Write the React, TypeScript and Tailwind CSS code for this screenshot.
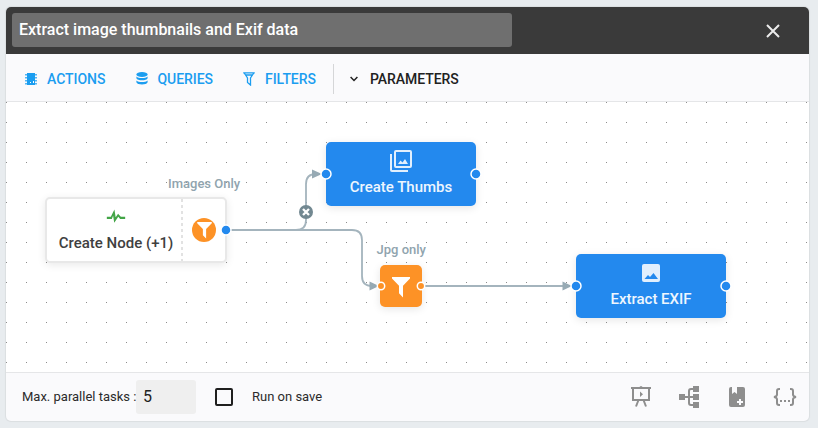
import type { ReactNode } from "react";

function Funnel({ className }: { className: string }) {
  return (
    <svg viewBox="0 0 18 21" className={className} fill="white">
      <path d="M0 0H18V1.5L11 8.7V20.5L7 16.3V8.7L0 1.5Z" />
    </svg>
  );
}

function ChipIcon() {
  return (
    <svg width="12" height="12" viewBox="0 0 12 12" fill="#1b9df0">
      <path d="M2 0H10V12H2Z" />
      <path d="M0 1H12V2.500H0ZM0 4H12V5.500H0ZM0 7H12V8.500H0ZM0 10H12V11.500H0Z" opacity="0.75" />
      <path d="M5 9H6V10H5ZM8 8H9V10H8Z" fill="white" />
    </svg>
  );
}

function DatabaseIcon() {
  return (
    <svg width="12" height="13" viewBox="0 0 12 13" fill="#1b9df0">
      <ellipse cx="6" cy="2.5" rx="5.6" ry="2.5" />
      <path d="M.4 4.4C2.5 6.4 9.5 6.4 11.6 4.4V6.2C10.8 9 1.2 9 .4 6.2Z" />
      <path d="M.4 8.4C2.5 10.4 9.5 10.4 11.6 8.4V10.3C10.8 13.2 1.2 13.2 .4 10.3Z" />
    </svg>
  );
}

function FilterOutlineIcon() {
  return (
    <svg width="12" height="14" viewBox="0 0 12 14" fill="none" stroke="#1b9df0" strokeWidth="1.3">
      <path d="M.2 .8H11.8M1.2 1L4.5 6V10.5L7.5 13V6L10.8 1M2.2 3H9.8" />
    </svg>
  );
}

function Action({ icon, label }: { icon: ReactNode; label: string }) {
  return (
    <button className="flex h-full items-center text-sm font-medium tracking-[-0.05px] text-[#1b9df0]">
      <span className="flex w-[22px]">{icon}</span>
      {label}
    </button>
  );
}

function BlueNode({ className, icon, label }: { className: string; icon: ReactNode; label: string }) {
  return (
    <div
      className={`absolute flex h-16 w-[150px] flex-col items-center rounded-[5px] bg-[#2389ee] text-[15px] leading-[20px] font-medium text-[#eef6fe] shadow-[0_2px_8px_rgba(0,0,0,0.1)] ${className}`}
    >
      <span className="flex h-[35px] items-end">{icon}</span>
      <span className="whitespace-nowrap">{label}</span>
    </div>
  );
}

function Canvas() {
  return (
    <div className="relative h-[270px] shrink-0 overflow-hidden bg-white">
      <svg className="absolute inset-0" width="803" height="270" viewBox="6 102 803 270" fill="none">
        <defs>
          <pattern id="grid" x="6" y="102" width="20" height="20" patternUnits="userSpaceOnUse">
            <rect x="0" y="0" width="1" height="1" fill="#8c8c8c" shapeRendering="crispEdges" />
          </pattern>
        </defs>
        <rect x="6" y="102" width="803" height="270" fill="url(#grid)" />
        <g stroke="#a4b4bd" strokeWidth="1.8">
          <path d="M226 230H296Q306 230 306 220V184Q306 174 316 174" />
          <path d="M226 230H352Q362 230 362 240V276Q362 286 372 286" />
          <path d="M421 286H566" />
        </g>
        <g fill="#97aab4">
          <path d="M312 169.5L322 174L312 178.5Z" />
          <path d="M369.500 281.500L379 286L369.500 290.500Z" />
          <path d="M562.500 281.500L572 286L562.500 290.500Z" />
        </g>
      </svg>

      <span className="absolute top-[73px] left-[162px] text-[13px] leading-[18px] font-medium whitespace-nowrap text-[#90a4ae]">
        Images Only
      </span>
      <span className="absolute top-[139px] left-[370.5px] text-[13px] leading-[18px] font-medium whitespace-nowrap text-[#90a4ae]">
        Jpg only
      </span>

      <div className="absolute top-[95px] left-[39px] flex h-[66px] w-[182px] rounded-[5px] border-2 border-[#e8e8e8] bg-white shadow-[0_2px_8px_rgba(0,0,0,0.09)]">
        <div className="flex w-[134px] flex-col items-center pl-1 text-[15px] leading-[20px] font-medium text-[#404040]">
          <svg className="mt-[7px] mb-[7px]" width="20" height="20" viewBox="0 0 24 24" fill="#43a547">
            <path d="M1 13H5.800L10.100 4.200L11.600 13.400L14.500 9.300L17.800 13H23V15.500H17L14.700 13L9.900 20L8.500 11.600L7 15.500H1V13Z" />
          </svg>
          <span className="whitespace-nowrap">Create Node (+1)</span>
        </div>
        <div className="w-[2px] bg-[repeating-linear-gradient(#e2e2e2_0_3px,transparent_3px_6px)]" />
        <div className="flex w-[42px] items-center justify-center">
          <span className="flex size-6 items-center justify-center rounded-full bg-[#fd9226]">
            <Funnel className="mt-px h-[17px] w-[15px]" />
          </span>
        </div>
      </div>

      <BlueNode
        className="top-10 left-80"
        label="Create Thumbs"
        icon={
          <svg className="mb-[5px]" width="22" height="22" viewBox="0 0 22 22" fill="none" stroke="#e1effd" strokeWidth="2">
            <rect x="5" y="1" width="16" height="16" rx="1" />
            <path d="M1 4V20Q1 21 2 21H18" />
            <path d="M8 14L10.500 10.500L12.500 12.500L15 9L18 14Z" fill="#e1effd" stroke="none" />
          </svg>
        }
      />
      <BlueNode
        className="top-[152px] left-[570px]"
        label="Extract EXIF"
        icon={
          <svg className="mb-[7px]" width="18" height="18" viewBox="0 0 18 18">
            <rect width="18" height="18" rx="2" fill="#e1effd" />
            <path d="M2.500 15L6 11L8 13L11.500 9L16 15Z" fill="#2389ee" />
          </svg>
        }
      />
      <div className="absolute top-[163px] left-[374px] flex h-[42px] w-[42px] items-center justify-center rounded-[5px] bg-[#fd9226] shadow-[0_2px_8px_rgba(0,0,0,0.1)]">
        <Funnel className="mt-[3px] h-[21px] w-[18px]" />
      </div>

      <svg className="absolute inset-0" width="803" height="270" viewBox="6 102 803 270">
        <g fill="#2389ee" stroke="white" strokeWidth="1.5">
          <circle cx="226" cy="230" r="5" />
          <circle cx="326" cy="174" r="5" />
          <circle cx="476" cy="174" r="5" />
          <circle cx="576" cy="286" r="5" />
          <circle cx="726" cy="286" r="5" />
        </g>
        <g fill="#fd9226" stroke="white" strokeWidth="1.5">
          <circle cx="381" cy="286" r="3.700" />
          <circle cx="421" cy="286" r="3.700" />
        </g>
        <circle cx="306" cy="212" r="7" fill="#728891" />
        <path d="M303 209L309 215M309 209L303 215" stroke="white" strokeWidth="2.300" />
      </svg>
    </div>
  );
}

function FooterIcons() {
  return (
    <div className="mb-[2px] flex items-center gap-6 text-[#8e8e8e]">
      <svg width="24" height="24" viewBox="0 0 24 24" fill="none" stroke="currentColor" strokeWidth="2">
        <path d="M2 4H22M4 4V16H20V4M9.500 16L7 22.500M14.500 16L17 22.500" />
        <path d="M10 3.500Q12 .5 14 3.500M11 7.500V13L14 10.200Z" fill="currentColor" stroke="none" />
      </svg>
      <svg width="24" height="24" viewBox="0 0 24 24" fill="currentColor">
        <path d="M2 10H8V16H2ZM16 2H22V8H16ZM16 10H22V16H16ZM16 18H22V24H16Z" />
        <path d="M8 13H16M16 5H14Q12 5 12 7V19Q12 21 14 21H16" fill="none" stroke="currentColor" strokeWidth="2" />
      </svg>
      <svg width="24" height="24" viewBox="0 0 24 24">
        <path d="M6 3H18Q20 3 20 5V21Q20 23 18 23H6Q4 23 4 21V5Q4 3 6 3Z" fill="currentColor" />
        <path d="M7 3V10L9.500 8L12 10V3Z" fill="#fafafc" />
        <path d="M15 15V21M12 18H18" stroke="#fafafc" strokeWidth="2" />
      </svg>
      <svg width="24" height="24" viewBox="0 0 24 24" fill="none" stroke="currentColor" strokeWidth="2">
        <path d="M7 5H6Q4 5 4 7V10.500Q4 12.500 1 13Q4 13.500 4 15.500V19Q4 21 6 21H7M17 5H18Q20 5 20 7V10.500Q20 12.500 23 13Q20 13.500 20 15.500V19Q20 21 18 21H17" />
        <path d="M7 16H9V18H7ZM11 16H13V18H11ZM15 16H17V18H15Z" fill="currentColor" stroke="none" />
      </svg>
    </div>
  );
}

export default function App() {
  return (
    <div className="h-[428px] w-[818px] bg-[#e8ecef] pt-[7px] pl-[6px] font-[Roboto,sans-serif]">
      <div className="flex h-[414px] w-[803px] flex-col overflow-hidden rounded-[5px] bg-[#fafafc] shadow-[0_0_1px_1px_rgba(0,0,0,0.06)]">
        <header className="flex h-[47px] shrink-0 items-center justify-between bg-[#3a3a3a] pr-[29px] pl-[6px]">
          <div className="mb-px flex h-[34px] w-[500px] items-center rounded-[3px] bg-[#6f6f6f] pl-[7px] text-base font-medium text-white">
            Extract image thumbnails and Exif data
          </div>
          <svg width="14" height="14" viewBox="0 0 14 14" stroke="#ececec" strokeWidth="2">
            <path d="M1 1L13 13M13 1L1 13" />
          </svg>
        </header>

        <nav className="flex h-12 shrink-0 items-center border-b border-[#e5e6e8] pt-[2px] pl-[19px]">
          <div className="w-[110.5px]">
            <Action icon={<ChipIcon />} label="ACTIONS" />
          </div>
          <div className="w-[107.5px]">
            <Action icon={<DatabaseIcon />} label="QUERIES" />
          </div>
          <div className="w-[90px]">
            <Action icon={<FilterOutlineIcon />} label="FILTERS" />
          </div>
          <div className="flex h-[30px] items-center border-l border-[#d5d6d8] pl-4 text-sm font-medium tracking-[-0.05px] text-[#212121]">
            <svg className="mr-3" width="8" height="6" viewBox="0 0 8 6" fill="none" stroke="#212121" strokeWidth="1.500">
              <path d="M.6 1L4 4.500L7.400 1" />
            </svg>
            PARAMETERS
          </div>
        </nav>

        <Canvas />

        <footer className="flex min-h-0 flex-1 items-center justify-between border-t border-[#e5e6e8] pr-3 pl-4 text-[13px] text-[#2b2b2b]">
          <div className="flex items-center">
            <span className="w-[114px] whitespace-nowrap">Max. parallel tasks :</span>
            <div className="mb-px flex h-[34px] w-[60px] items-center rounded-[3px] bg-[#efefef] pl-[7px] text-base text-[#212121]">5</div>
            <span className="ml-[19px] size-[18px] rounded-[2px] border-2 border-[#1f1f1f]" />
            <span className="ml-[19px]">Run on save</span>
          </div>
          <FooterIcons />
        </footer>
      </div>
    </div>
  );
}
